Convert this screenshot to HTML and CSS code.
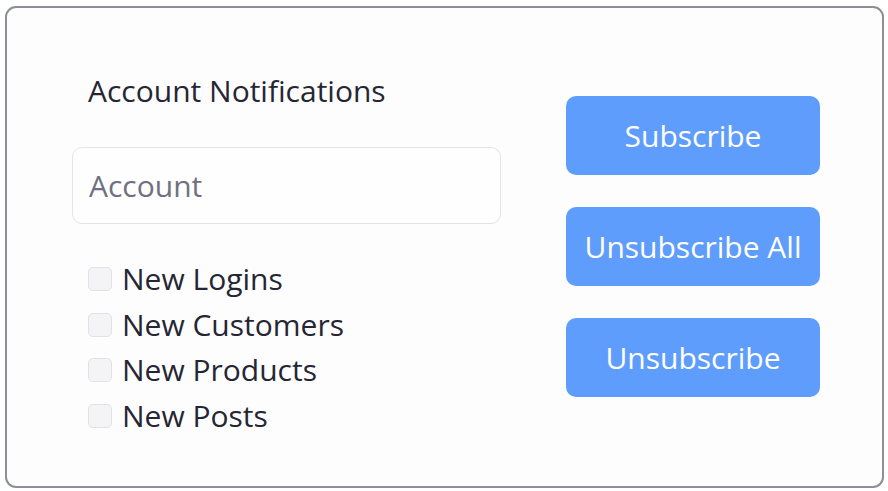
FILE: index.html
```html
<!DOCTYPE html>
<html>
<head>
<meta charset="utf-8">
<link rel="stylesheet" href="styles.css">
</head>
<body>
<div class="card">
  <div class="left">
    <div class="title">Account Notifications</div>
    <input class="field" type="text" placeholder="Account">
    <div class="checks">
      <label class="check"><span class="box"></span>New Logins</label>
      <label class="check"><span class="box"></span>New Customers</label>
      <label class="check"><span class="box"></span>New Products</label>
      <label class="check"><span class="box"></span>New Posts</label>
    </div>
  </div>
  <div class="right">
    <button class="btn">Subscribe</button>
    <button class="btn">Unsubscribe All</button>
    <button class="btn">Unsubscribe</button>
  </div>
</div>
</body>
</html>
```
FILE: styles.css
```css
* { box-sizing: border-box; }
html, body { margin: 0; padding: 0; background: #ffffff; }
body {
  font-family: "Open Sans", "Noto Sans", sans-serif;
  color: #2a2a35;
  padding: 6px 4px 0 5px;
}
.card {
  width: 879px;
  height: 482px;
  border: 2px solid #8c8f95;
  border-radius: 11px;
  background: #fdfdfe;
  display: flex;
  padding: 0 0 0 65px;
}
.left {
  width: 429px;
  display: flex;
  flex-direction: column;
}
.title {
  font-size: 30px;
  line-height: 40px;
  margin: 63px 0 0 16px;
  color: #262633;
}
.field {
  margin-top: 36px;
  width: 429px;
  height: 77px;
  border: 1.5px solid #e3e3ec;
  border-radius: 10px;
  background: #fefeff;
  padding: 0 0 0 16px;
  font-family: "Open Sans", "Noto Sans", sans-serif;
  font-size: 30px;
  outline: none;
}
.field::placeholder { color: #707080; }
.checks {
  margin: 32px 0 0 16px;
  display: flex;
  flex-direction: column;
}
.check {
  display: flex;
  align-items: center;
  font-size: 30px;
  line-height: 45.67px;
  color: #262633;
}
.box {
  width: 24px;
  height: 24px;
  border: 1.5px solid #e2e2e6;
  border-radius: 5px;
  background: #f4f4f6;
  margin-right: 10px;
  flex: none;
}
.right {
  margin: 88px 0 0 65px;
  display: flex;
  flex-direction: column;
  gap: 32px;
}
.btn {
  width: 254px;
  height: 79px;
  border: none;
  border-radius: 10px;
  background: #5f9dfd;
  color: #ffffff;
  font-family: "Open Sans", "Noto Sans", sans-serif;
  font-size: 30px;
  padding: 0;
}
```
